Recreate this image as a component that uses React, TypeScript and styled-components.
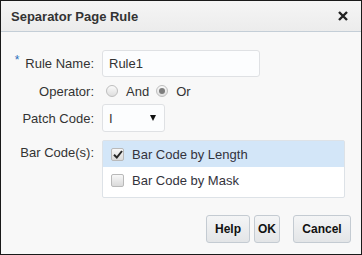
import styled, { createGlobalStyle } from 'styled-components';

const Global = createGlobalStyle`
    * { box-sizing: border-box; }
    body {
        margin: 0;
        font-family: 'Liberation Sans', Arial, sans-serif;
    }
`;

const Dialog = styled.div`
    width: 362px;
    height: 255px;
    border: 1px solid rgb(26, 26, 26);
    background: rgb(248, 248, 248);
    display: flex;
    flex-direction: column;
`;

const Header = styled.div`
    height: 31px;
    flex: none;
    display: flex;
    align-items: center;
    justify-content: space-between;
    padding: 0 13px 0 10px;
    background: linear-gradient(rgb(245, 245, 245), rgb(236, 236, 236));
    border-bottom: 1px solid rgb(196, 206, 215);
`;

const Title = styled.div`
    font-size: 13px;
    font-weight: bold;
    color: rgb(51, 51, 51);
    padding-top: 1px;
`;

const Close = styled.button`
    border: none;
    background: none;
    padding: 0;
    width: 10px;
    height: 10px;
    display: flex;
    cursor: pointer;
`;

const Body = styled.div`
    flex: 1;
    display: flex;
    flex-direction: column;
    padding-top: 18px;
`;

const Row = styled.div<{ $top: number; $align?: string }>`
    display: flex;
    align-items: ${p => p.$align || 'center'};
    margin-top: ${p => p.$top}px;
`;

const Label = styled.div<{ $pad?: number }>`
    width: 93px;
    flex: none;
    text-align: right;
    font-size: 13px;
    color: rgb(51, 51, 51);
    padding-top: ${p => p.$pad || 0}px;
    margin-right: 8px;
`;

const Req = styled.span`
    color: rgb(42, 110, 187);
    font-size: 12px;
    position: relative;
    top: -4px;
    margin-right: 6px;
`;

const TextInput = styled.input`
    width: 158px;
    height: 27px;
    border: 1px solid rgb(223, 225, 228);
    border-radius: 3px;
    background: rgb(252, 253, 254);
    padding: 0 6px;
    font-family: inherit;
    font-size: 13px;
    color: rgb(51, 51, 51);
    outline: none;
`;

const Radios = styled.div`
    display: flex;
    align-items: center;
    height: 18px;
    font-size: 13px;
    color: rgb(51, 51, 51);
`;

const Radio = styled.span<{ $on?: boolean; $left: number }>`
    width: 12px;
    height: 12px;
    border-radius: 50%;
    border: 1px solid rgb(190, 190, 190);
    background: linear-gradient(rgb(250, 250, 250), rgb(222, 222, 222));
    display: inline-flex;
    align-items: center;
    justify-content: center;
    margin: 0 8px 0 ${p => p.$left}px;

    &::after {
        content: '';
        width: 6px;
        height: 6px;
        border-radius: 50%;
        background: ${p => (p.$on ? 'rgb(125, 125, 125)' : 'transparent')};
    }
`;

const Select = styled.div`
    width: 63px;
    height: 28px;
    border: 1px solid rgb(223, 225, 228);
    border-radius: 3px;
    background: rgb(252, 253, 254);
    display: flex;
    align-items: center;
    justify-content: space-between;
    padding: 0 8px 0 6px;
    font-size: 13px;
    color: rgb(51, 51, 51);
`;

const Caret = styled.span`
    width: 0;
    height: 0;
    border-left: 3.5px solid transparent;
    border-right: 3.5px solid transparent;
    border-top: 6px solid rgb(17, 17, 17);
`;

const List = styled.div`
    width: 243px;
    border: 1px solid rgb(221, 226, 231);
    border-radius: 2px;
    background: rgb(255, 255, 255);
    padding-bottom: 4px;
`;

const Item = styled.div<{ $sel?: boolean }>`
    height: 26px;
    display: flex;
    align-items: center;
    padding-left: 8px;
    background: ${p => (p.$sel ? 'rgb(211, 230, 248)' : 'transparent')};
    font-size: 13px;
    color: rgb(51, 51, 60);
`;

const Check = styled.span`
    width: 13px;
    height: 13px;
    border: 1px solid rgb(185, 185, 185);
    border-radius: 2px;
    background: linear-gradient(rgb(248, 248, 248), rgb(218, 218, 218));
    display: inline-flex;
    align-items: center;
    justify-content: center;
    margin-right: 8px;
`;

const Footer = styled.div`
    display: flex;
    justify-content: flex-end;
    padding: 17px 10px 0 0;
`;

const Button = styled.button<{ $w: number; $gap?: number }>`
    width: ${p => p.$w}px;
    height: 28px;
    padding: 0;
    margin-left: ${p => p.$gap ?? 4}px;
    border: 1px solid rgb(196, 203, 210);
    border-radius: 3px;
    background: linear-gradient(rgb(244, 245, 246), rgb(227, 229, 231));
    font-family: inherit;
    font-size: 12px;
    font-weight: bold;
    color: rgb(17, 17, 17);
    cursor: pointer;
`;

const App = () => (
    <Dialog>
        <Global />
        <Header>
            <Title>Separator Page Rule</Title>
            <Close aria-label="Close">
                <svg width="10" height="10" viewBox="0 0 10 10">
                    <path d="M1 1L9 9M9 1L1 9" stroke="rgb(34,34,34)" strokeWidth="2.4" />
                </svg>
            </Close>
        </Header>
        <Body>
            <Row $top={0}>
                <Label>
                    <Req>*</Req>Rule Name:
                </Label>
                <TextInput defaultValue="Rule1" />
            </Row>
            <Row $top={5}>
                <Label>Operator:</Label>
                <Radios>
                    <Radio $left={4} />
                    <span>And</span>
                    <Radio $on $left={7} />
                    <span>Or</span>
                </Radios>
            </Row>
            <Row $top={4}>
                <Label>Patch Code:</Label>
                <Select>
                    <span>I</span>
                    <Caret />
                </Select>
            </Row>
            <Row $top={8} $align="flex-start">
                <Label $pad={5}>Bar Code(s):</Label>
                <List>
                    <Item $sel>
                        <Check>
                            <svg width="10" height="9" viewBox="0 0 10 9">
                                <path d="M1 4.8L3.8 7.5L9 1" stroke="rgb(40,40,40)" strokeWidth="2" fill="none" />
                            </svg>
                        </Check>
                        Bar Code by Length
                    </Item>
                    <Item>
                        <Check />
                        Bar Code by Mask
                    </Item>
                </List>
            </Row>
            <Footer>
                <Button $w={44}>Help</Button>
                <Button $w={26}>OK</Button>
                <Button $w={58} $gap={13}>Cancel</Button>
            </Footer>
        </Body>
    </Dialog>
);

export default App;
